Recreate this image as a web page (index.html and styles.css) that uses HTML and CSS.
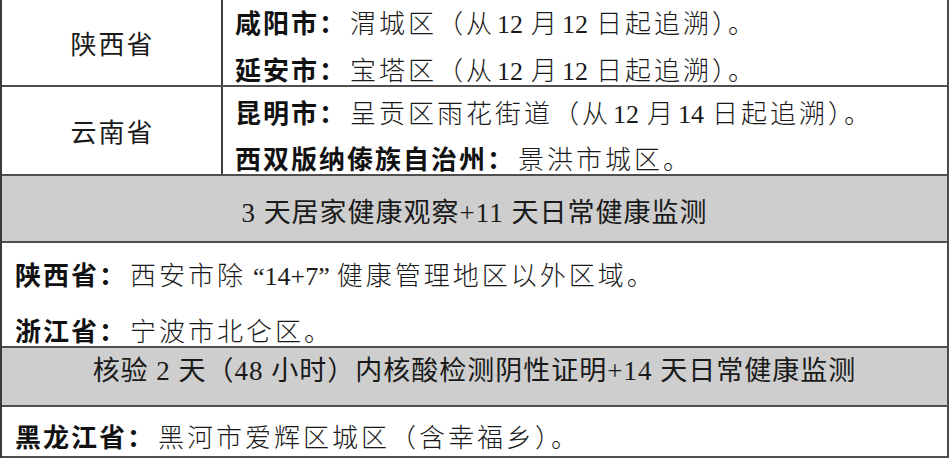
FILE: index.html
```html
<!DOCTYPE html>
<html lang="zh-CN">
<head>
<meta charset="utf-8">
<title>健康管理地区</title>
<link rel="stylesheet" href="styles.css">
</head>
<body>
<div class="sheet">
  <div class="row split r1">
    <div class="prov">陕西省</div>
    <div class="cities">
      <p><b>咸阳市：</b>渭城区（从<span class="n">12</span>月<span class="n">12</span>日起追溯）。</p>
      <p><b>延安市：</b>宝塔区（从<span class="n">12</span>月<span class="n">12</span>日起追溯）。</p>
    </div>
  </div>
  <div class="row split r2">
    <div class="prov">云南省</div>
    <div class="cities">
      <p><b>昆明市：</b>呈贡区雨花街道（从<span class="n">12</span>月<span class="n">14</span>日起追溯）。</p>
      <p><b>西双版纳傣族自治州：</b>景洪市城区。</p>
    </div>
  </div>
  <div class="row band b1">3 天居家健康观察+11 天日常健康监测</div>
  <div class="row full r4">
    <p><b>陕西省：</b>西安市除<span class="n q">“14+7”</span>健康管理地区以外区域。</p>
    <p><b>浙江省：</b>宁波市北仑区。</p>
  </div>
  <div class="row band b2">核验 2 天（48 小时）内核酸检测阴性证明+14 天日常健康监测</div>
  <div class="row full r6">
    <p><b>黑龙江省：</b>黑河市爱辉区城区（含幸福乡）。</p>
  </div>
</div>
</body>
</html>
```
FILE: styles.css
```css
html, body {
  margin: 0;
  padding: 0;
  background: #ffffff;
}
body {
  font-family: "Liberation Serif", "Noto Sans CJK SC", serif;
  color: #1a1a1a;
}
.sheet {
  width: 945px;
  border-left: 2px solid #3a3a3a;
  border-right: 2px solid #4a4a4a;
}
.row {
  box-sizing: border-box;
  border-bottom: 2px solid #4f4f4f;
}
p {
  margin: 0;
  font-size: 26px;
  letter-spacing: 3px;
  white-space: nowrap;
  font-weight: 300;
}
b {
  font-family: "Noto Sans CJK SC", sans-serif;
  font-weight: 700;
  color: #111;
  letter-spacing: 2px;
  margin-right: 3px;
}
.n {
  font-family: "Liberation Serif", serif;
  letter-spacing: 0;
  margin-left: 2px;
  margin-right: 8px;
}
.q {
  margin-left: 7px;
  margin-right: 7px;
}
.split {
  display: grid;
  grid-template-columns: 221px 1fr;
  grid-template-rows: minmax(0, 1fr);
}
.prov {
  border-right: 2px solid #3c3c3c;
  display: flex;
  align-items: center;
  justify-content: center;
  font-family: "Noto Sans CJK SC", sans-serif;
  font-size: 26px;
  letter-spacing: 2px;
  padding-left: 2px;
  font-weight: 400;
}
.cities {
  padding-left: 12px;
}
.r1 {
  height: 87px;
}
.r1 .cities p {
  line-height: 44px;
}
.r2 {
  height: 89px;
}
.r2 .cities {
  padding-top: 3px;
}
.r2 .cities p {
  line-height: 43px;
}
.band {
  background: #cecece;
  text-align: center;
  font-size: 27px;
  letter-spacing: 1px;
  font-weight: 400;
}
.b1 {
  height: 67px;
  padding-top: 15px;
  line-height: 44px;
}
.full {
  padding-left: 13px;
}
.r4 {
  height: 105px;
  padding-top: 4px;
}
.r4 p {
  line-height: 53px;
}
.b2 {
  height: 59px;
  line-height: 47px;
  letter-spacing: 1px;
}
.r6 {
  height: 51px;
  padding-top: 8px;
}
.r6 p {
  line-height: 41px;
}
```
